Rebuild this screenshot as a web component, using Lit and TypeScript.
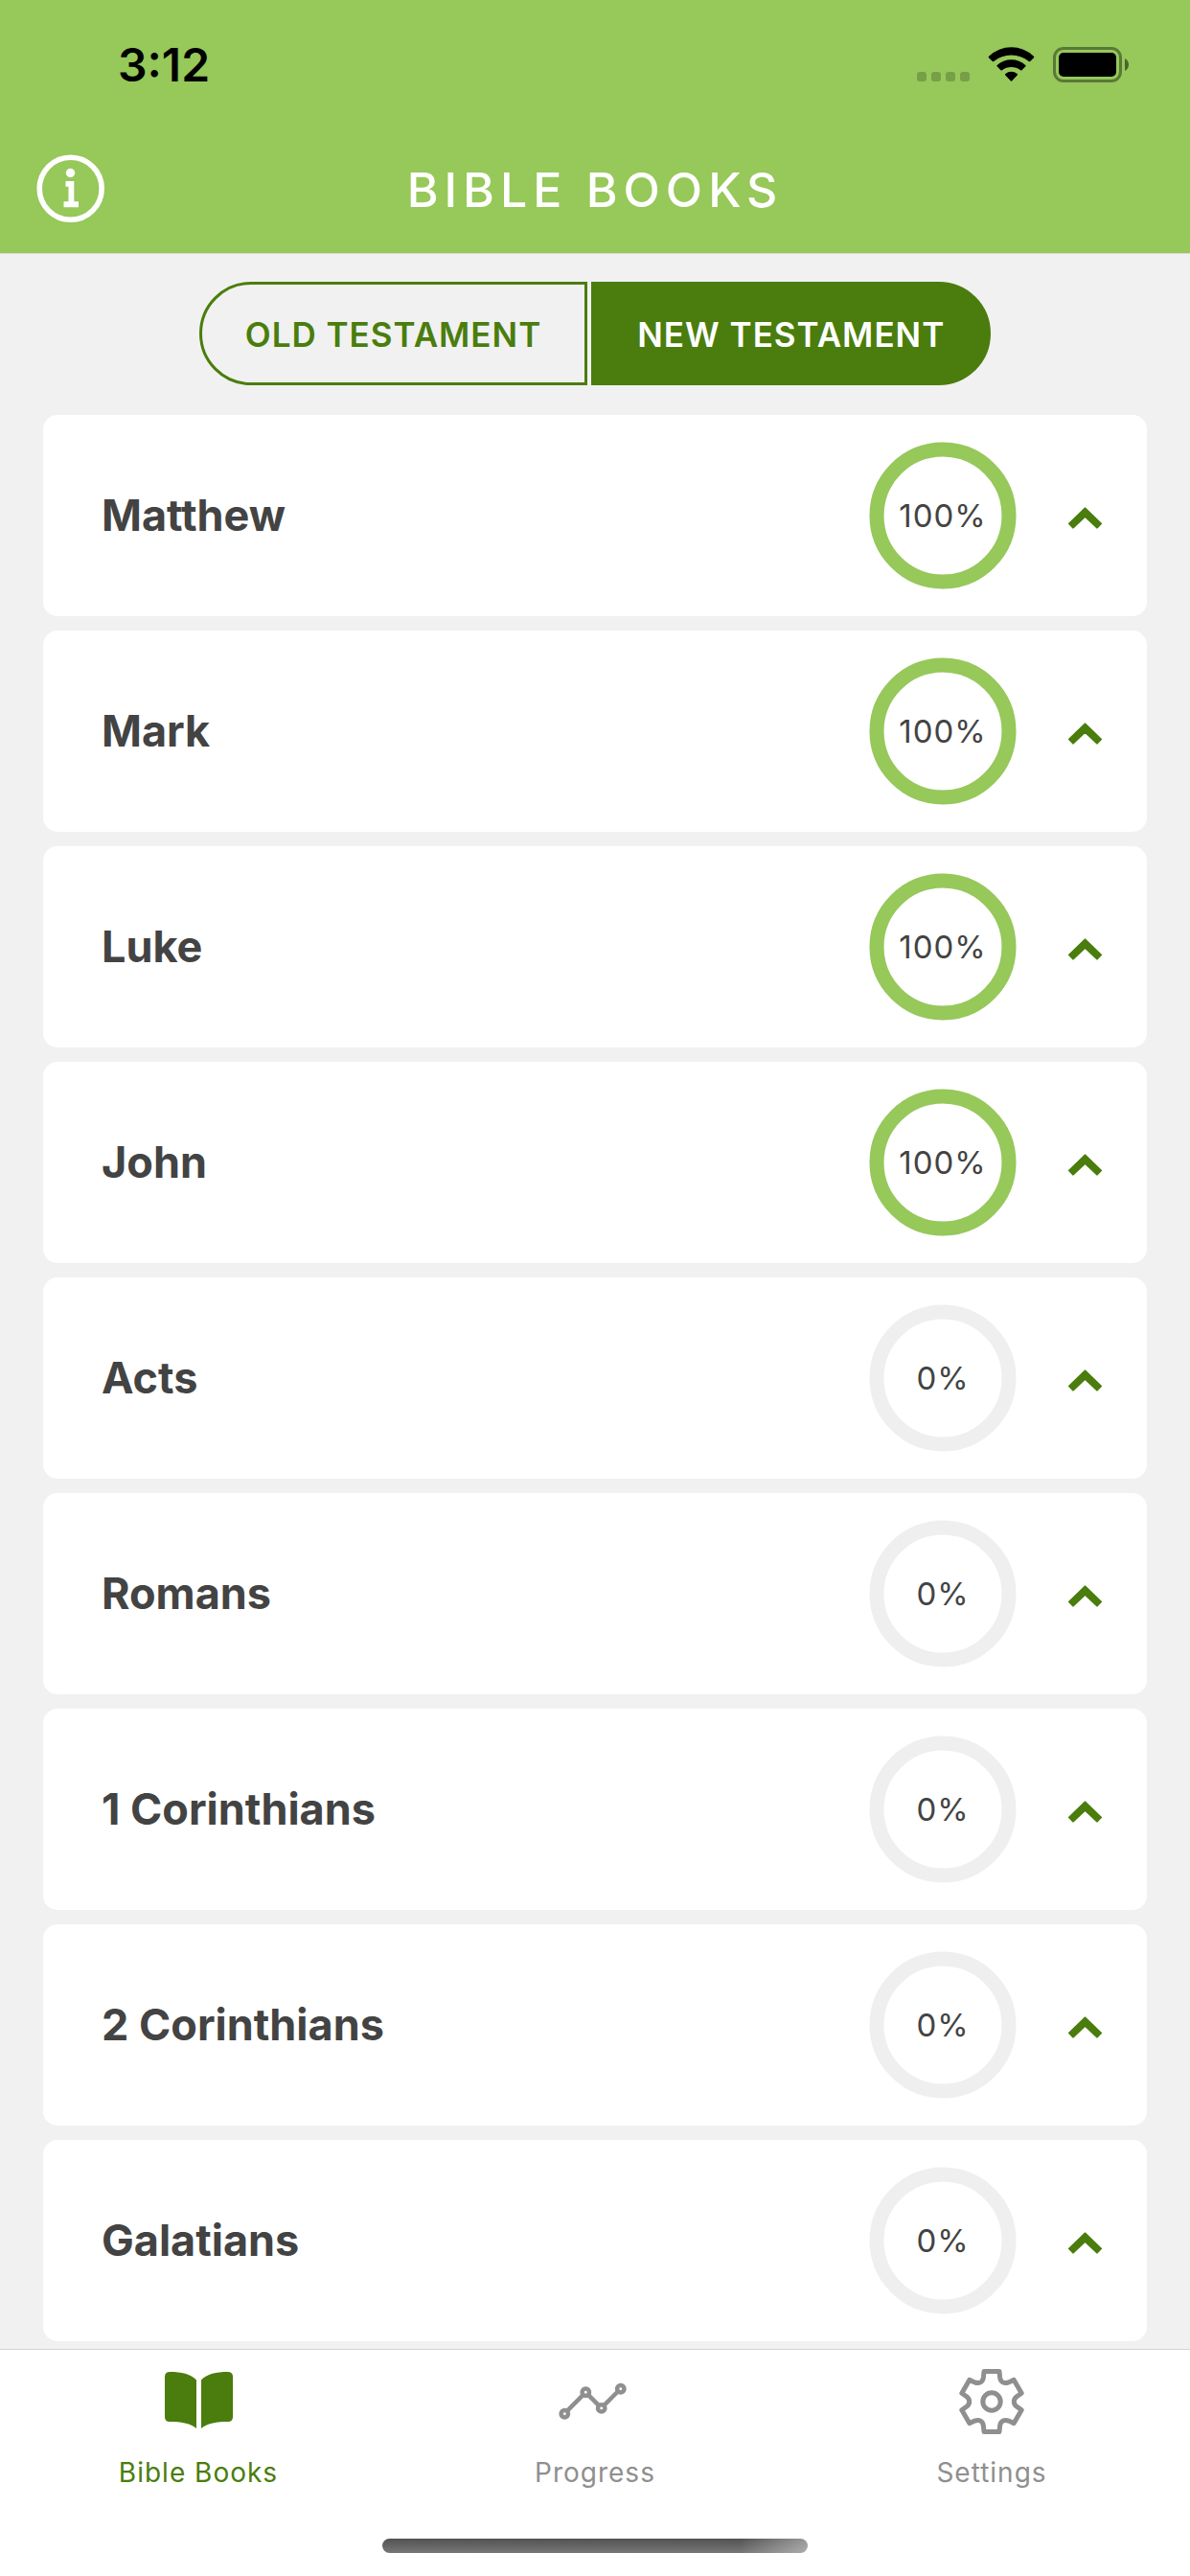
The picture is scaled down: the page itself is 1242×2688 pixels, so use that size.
import { LitElement, html, css, svg } from "lit";
import { customElement, property, state } from "lit/decorators.js";
import { classMap } from "lit/directives/class-map.js";

interface Book {
  name: string;
  percent: number;
}

const NEW_TESTAMENT: Book[] = [
  { name: "Matthew", percent: 100 },
  { name: "Mark", percent: 100 },
  { name: "Luke", percent: 100 },
  { name: "John", percent: 100 },
  { name: "Acts", percent: 0 },
  { name: "Romans", percent: 0 },
  { name: "1 Corinthians", percent: 0 },
  { name: "2 Corinthians", percent: 0 },
  { name: "Galatians", percent: 0 },
];

const OLD_TESTAMENT: Book[] = [
  "Genesis",
  "Exodus",
  "Leviticus",
  "Numbers",
  "Deuteronomy",
  "Joshua",
  "Judges",
  "Ruth",
  "1 Samuel",
].map((name) => ({ name, percent: 0 }));

/** Outline of a six-toothed gear centred on the origin. */
function gearPath(): string {
  let d = "";
  for (let k = 0; k < 6; k++) {
    const a = (k * Math.PI) / 3;
    const p = (x: number, y: number) =>
      `${(x * Math.cos(a) - y * Math.sin(a)).toFixed(2)} ${(x * Math.sin(a) + y * Math.cos(a)).toFixed(2)}`;
    d += `${k === 0 ? "M" : "L"}${p(31.2, -8.8)}L${p(26.2, -5.2)}`;
    d += `Q${p(23.3, -3)} ${p(23.3, 0)}Q${p(23.3, 3)} ${p(26.2, 5.2)}L${p(31.2, 8.8)}`;
  }
  return d + "Z";
}

const bookIcon = svg`
  <path fill="currentColor" d="M5.500 0C17 0 27 2 33 8.500V59C26 53.500 17 52 5 52Q0 52 0 47V5Q0 0 5.500 0Z"/>
  <path fill="currentColor" d="M65.500 0C54 0 44 2 38 8.500V59C45 53.500 54 52 66 52Q71 52 71 47V5Q71 0 65.500 0Z"/>`;

const progressIcon = svg`
  <g fill="none" stroke="currentColor" stroke-width="4.500">
    <path d="M5.800 40.900L22.500 24.200M28.100 24.200L38.800 34.900M44.500 34.900L58.800 20.500"/>
    <circle cx="3.300" cy="43.700" r="3.700"/>
    <circle cx="25.300" cy="21.300" r="3.700"/>
    <circle cx="41.700" cy="37.900" r="3.700"/>
    <circle cx="61.800" cy="17.700" r="3.700"/>
  </g>`;

const gearIcon = svg`
  <g fill="none" stroke="currentColor" stroke-width="5" stroke-linejoin="round">
    <path transform="translate(35 31)" d=${gearPath()}/>
    <circle cx="35" cy="31" r="9.200"/>
  </g>`;

@customElement("progress-ring")
export class ProgressRing extends LitElement {
  @property({ type: Number }) percent = 0;

  static styles = css`
    :host {
      display: grid;
      place-items: center;
      width: 154px;
      height: 154px;
    }
    .ring,
    .value {
      grid-area: 1 / 1;
    }
    .ring {
      width: 100%;
      height: 100%;
      fill: none;
      stroke-width: 15;
    }
    .track {
      stroke: #efefef;
    }
    .arc {
      stroke: #96c85a;
    }
    .value {
      font-size: 33px;
      line-height: 40px;
      letter-spacing: 1px;
    }
  `;

  render() {
    const length = 2 * Math.PI * 69;
    return html`
      <svg class="ring" viewBox="0 0 154 154" aria-hidden="true">
        <circle class="track" cx="77" cy="77" r="69"></circle>
        ${this.percent > 0
          ? svg`<circle class="arc" cx="77" cy="77" r="69" transform="rotate(-90 77 77)"
              stroke-dasharray="${(length * this.percent) / 100} ${length}"></circle>`
          : null}
      </svg>
      <span class="value">${this.percent}%</span>
    `;
  }
}

@customElement("book-row")
export class BookRow extends LitElement {
  @property() name = "";
  @property({ type: Number }) percent = 0;

  static styles = css`
    :host {
      display: block;
    }
    .card {
      display: flex;
      align-items: center;
      width: 100%;
      padding: 28px 47px 28px 61px;
      border: 0;
      border-radius: 15px;
      background: #fff;
      color: #434343;
      font: inherit;
      text-align: left;
      cursor: pointer;
    }
    .name {
      flex: 1;
      font-size: 45px;
      line-height: 56px;
      font-weight: 700;
    }
    .chevron {
      width: 35px;
      height: 28px;
      margin-left: 54px;
      fill: #4a7d0d;
      stroke: #4a7d0d;
      stroke-width: 2;
      stroke-linejoin: round;
    }
  `;

  render() {
    return html`
      <button class="card" type="button">
        <span class="name">${this.name}</span>
        <progress-ring .percent=${this.percent}></progress-ring>
        <svg class="chevron" viewBox="0 0 35 28" aria-hidden="true">
          <path d="M17.500 6.400L34 22.400L30 26.600L17.500 14.700L5 26.600L1 22.400Z"></path>
        </svg>
      </button>
    `;
  }
}

@customElement("app-root")
export class AppRoot extends LitElement {
  @state() private testament: "old" | "new" = "new";

  static styles = css`
    :host {
      display: flex;
      flex-direction: column;
      min-height: 100vh;
      background: #f1f1f1;
      font-family: Inter, "Liberation Sans", sans-serif;
    }
    .header {
      background: #96c85a;
      border-bottom: 1px solid #d8d8d8;
    }
    .status {
      box-sizing: border-box;
      display: flex;
      align-items: center;
      justify-content: space-between;
      height: 132px;
      padding: 4px 64px 0 123px;
      color: #000;
    }
    .time {
      font-size: 48px;
      line-height: 60px;
      font-weight: 600;
    }
    .indicators {
      width: 221px;
      height: 38px;
    }
    .nav {
      display: grid;
      grid-template-columns: 1fr auto 1fr;
      align-items: center;
      height: 132px;
      padding: 0 38px;
    }
    .info {
      justify-self: start;
      display: flex;
      padding: 0;
      border: 0;
      background: none;
      color: #fff;
      cursor: pointer;
    }
    .info-icon {
      width: 72px;
      height: 72px;
      overflow: visible;
    }
    .title {
      margin: 0;
      color: #fff;
      font-size: 50px;
      line-height: 60px;
      font-weight: 500;
      letter-spacing: 6px;
    }
    .content {
      flex: 1;
      padding: 29px 45px 8px;
    }
    .segments {
      display: flex;
      justify-content: center;
      gap: 4px;
      margin-bottom: 31px;
    }
    .segment {
      height: 108px;
      padding: 2px 45px 0;
      border: 3px solid #4a7d0d;
      border-radius: 54px 0 0 54px;
      background: none;
      color: #4a7d0d;
      font-family: inherit;
      font-size: 35px;
      line-height: 44px;
      font-weight: 600;
      letter-spacing: 1px;
      cursor: pointer;
    }
    .segment.end {
      border-radius: 0 54px 54px 0;
    }
    .segment.selected {
      background: #4a7d0d;
      color: #fff;
    }
    .books {
      display: flex;
      flex-direction: column;
      gap: 15px;
      margin: 0;
      padding: 0;
      list-style: none;
    }
    .footer {
      position: sticky;
      bottom: 0;
      border-top: 1px solid #d3d3d3;
      background: #fff;
    }
    .tabs {
      display: grid;
      grid-template-columns: repeat(3, 1fr);
      padding-top: 23px;
    }
    .tab {
      display: flex;
      flex-direction: column;
      align-items: center;
      gap: 25px;
      color: #8f8f8f;
      font-size: 28px;
      line-height: 36px;
      letter-spacing: 1px;
      text-decoration: none;
    }
    .tab.active {
      color: #4a7d0d;
    }
    .tab-icon {
      width: 71px;
      height: 62px;
      overflow: visible;
    }
    .home-bar {
      width: 444px;
      max-width: 60%;
      height: 15px;
      margin: 51px auto 24px;
      border-radius: 8px;
      background:
        linear-gradient(90deg, transparent 84%, rgba(255, 255, 255, 0.4)),
        linear-gradient(#525252, #777777);
    }
  `;

  private renderSegment(id: "old" | "new", label: string) {
    const selected = this.testament === id;
    return html`<button
      type="button"
      class=${classMap({ segment: true, end: id === "new", selected })}
      aria-pressed=${selected}
      @click=${() => (this.testament = id)}
    >${label}</button>`;
  }

  private renderTab(label: string, icon: unknown, active = false) {
    return html`<a href="#" class=${classMap({ tab: true, active })}>
      <svg class="tab-icon" viewBox="0 0 71 62" aria-hidden="true">${icon}</svg>
      <span>${label}</span>
    </a>`;
  }

  render() {
    const books = this.testament === "new" ? NEW_TESTAMENT : OLD_TESTAMENT;
    return html`
      <header class="header">
        <div class="status">
          <span class="time">3:12</span>
          <svg class="indicators" viewBox="0 0 221 38" aria-hidden="true">
            <g opacity="0.2">
              <rect x="0" y="26" width="10" height="10" rx="3"></rect>
              <rect x="15" y="26" width="10" height="10" rx="3"></rect>
              <rect x="30" y="26" width="10" height="10" rx="3"></rect>
              <rect x="45" y="26" width="10" height="10" rx="3"></rect>
            </g>
            <g transform="translate(74.500 0)">
              <path d="M0.500 11.200Q-0.300 10.400 0.600 9.700A34 34 0 0 1 47.400 9.700Q48.300 10.400 47.500 11.200L43.700 15Q43 15.600 42.300 15A29 29 0 0 0 5.700 15Q5 15.600 4.300 15Z"></path>
              <path d="M9.100 20.300Q8.400 19.600 9.200 19A22 22 0 0 1 38.800 19Q39.600 19.600 38.900 20.300L35 24.200Q34.300 24.900 33.600 24.300A15.800 15.800 0 0 0 14.400 24.300Q13.700 24.900 13 24.200Z"></path>
              <path d="M17.800 29.500Q17 28.700 17.900 28A9.500 9.500 0 0 1 30.100 28Q31 28.700 30.200 29.500L24.500 35.400Q24 36 23.500 35.400Z"></path>
            </g>
            <rect x="143.500" y="1.500" width="69" height="34" rx="9.500" fill="none" stroke="#000" stroke-width="3" opacity="0.400"></rect>
            <rect x="148" y="6" width="60" height="25" rx="5"></rect>
            <path d="M217 12Q221 14.500 221 18.500Q221 22.500 217 25Z" opacity="0.500"></path>
          </svg>
        </div>
        <div class="nav">
          <button class="info" type="button" aria-label="Information">
            <svg class="info-icon" viewBox="0 0 72 72" aria-hidden="true">
              <circle cx="35.700" cy="34.800" r="32.500" fill="none" stroke="currentColor" stroke-width="5.600"></circle>
              <circle cx="35.500" cy="18.500" r="4.700" fill="currentColor"></circle>
              <path fill="currentColor" d="M30.500 27H39.300V48.200H44V54.200H28.500V48.200H33.500V32.800H30.500Z"></path>
            </svg>
          </button>
          <h1 class="title">BIBLE BOOKS</h1>
        </div>
      </header>
      <main class="content">
        <div class="segments">
          ${this.renderSegment("old", "OLD TESTAMENT")}${this.renderSegment("new", "NEW TESTAMENT")}
        </div>
        <ul class="books">
          ${books.map(
            (book) => html`<li><book-row .name=${book.name} .percent=${book.percent}></book-row></li>`
          )}
        </ul>
      </main>
      <footer class="footer">
        <nav class="tabs">
          ${this.renderTab("Bible Books", bookIcon, true)}
          ${this.renderTab("Progress", progressIcon)}
          ${this.renderTab("Settings", gearIcon)}
        </nav>
        <div class="home-bar"></div>
      </footer>
    `;
  }
}
